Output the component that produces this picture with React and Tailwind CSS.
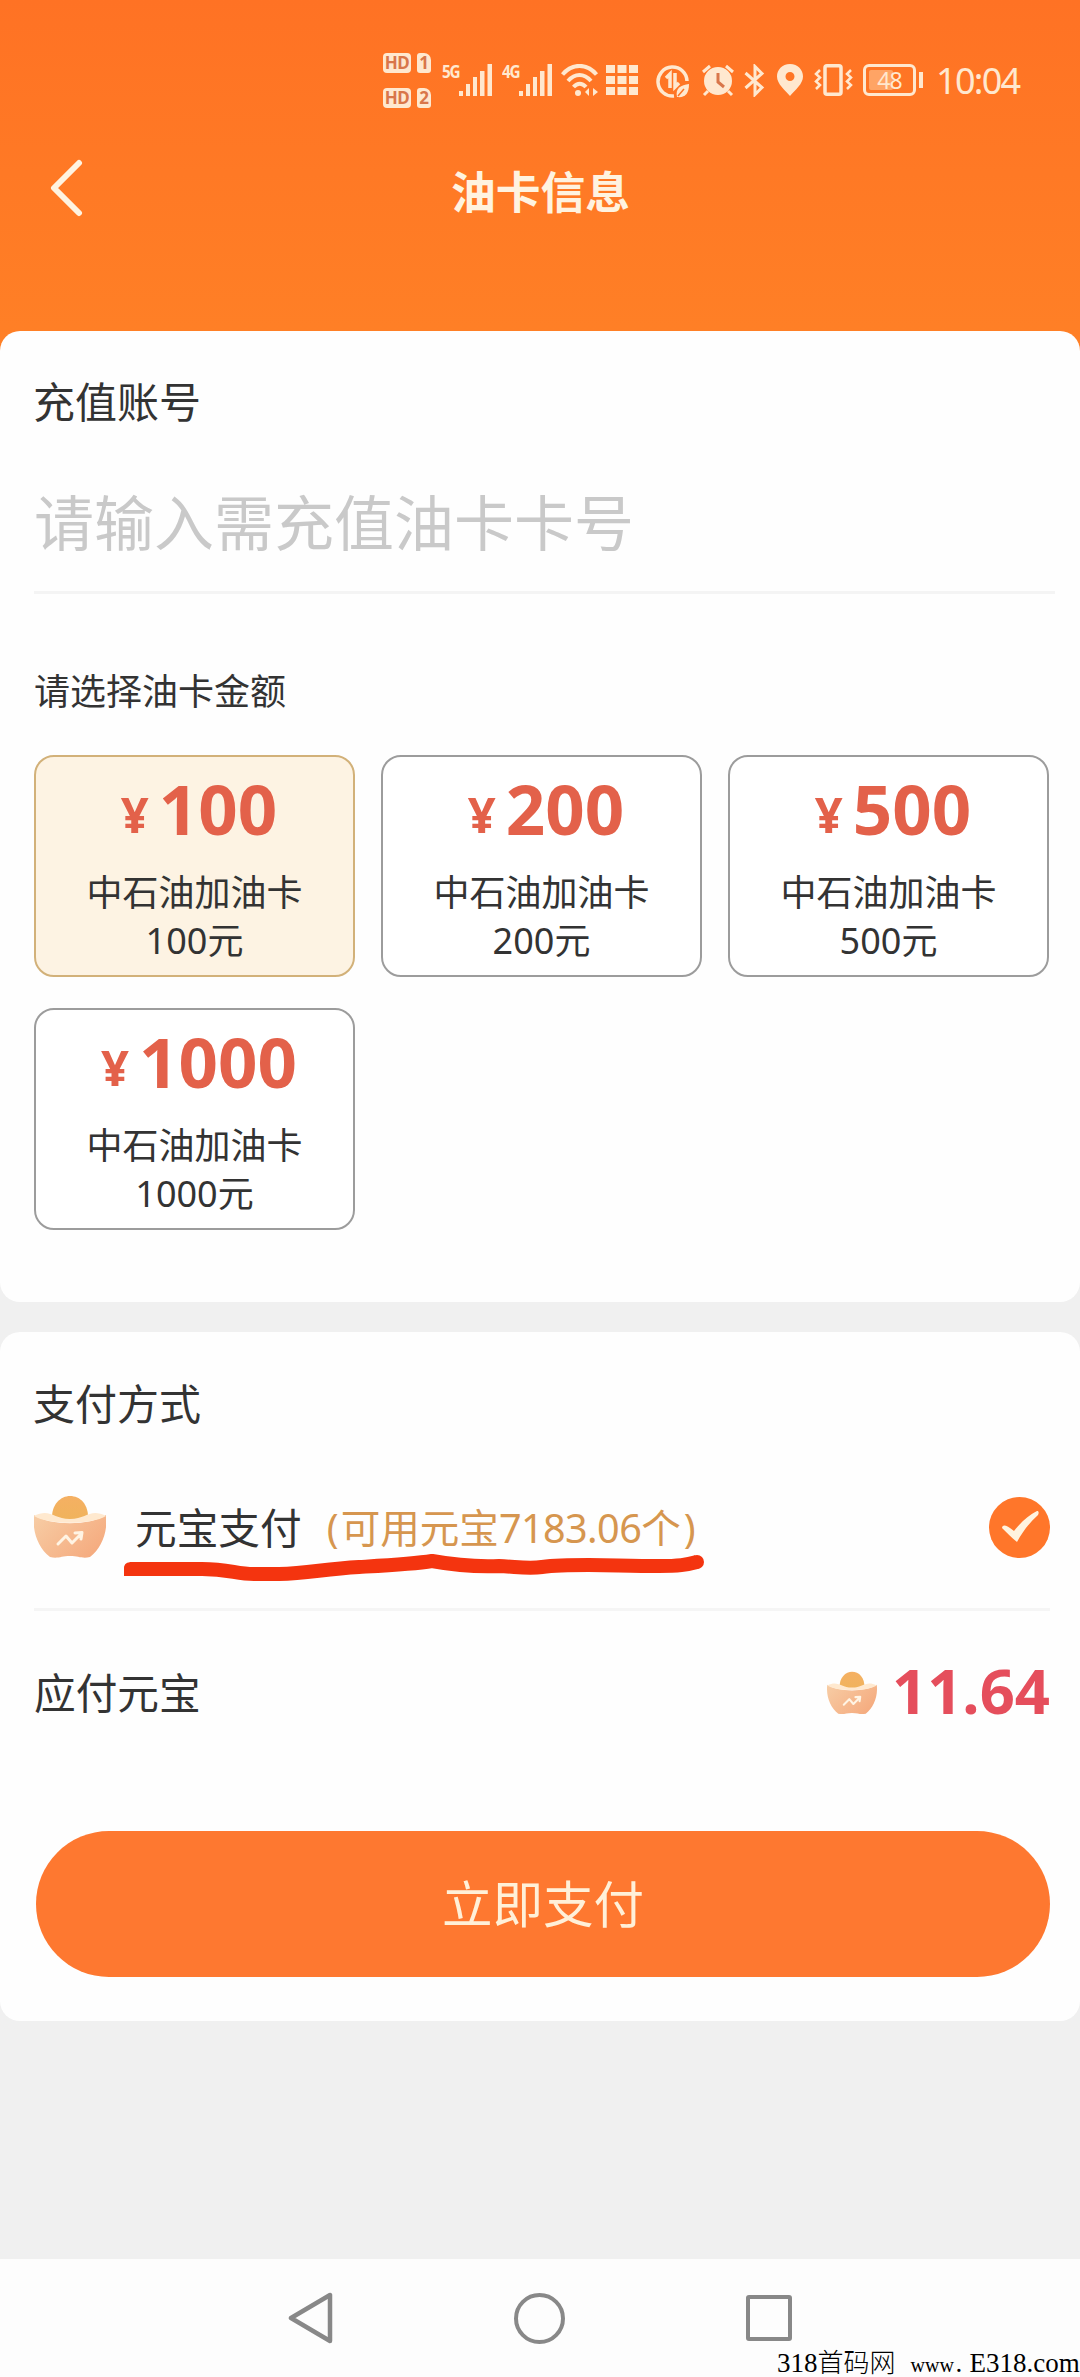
import React, { useState } from 'react';

const cards = [100, 200, 500, 1000];

const Signal = ({ label }) => (
    <div className="flex">
        <span className="w-[17px] h-[14px] mt-[1px] text-[17px] leading-[14px] font-bold tracking-[-1.5px] scale-x-90 origin-left">{label}</span>
        <svg width="34" height="32" viewBox="0 0 34 32" fill="currentColor">
            <rect x="0" y="27" width="4" height="5" />
            <rect x="7" y="20" width="4" height="12" />
            <rect x="14" y="13" width="4" height="19" />
            <rect x="21" y="7" width="4.500" height="25" />
            <rect x="28.500" y="0" width="4.500" height="32" />
        </svg>
    </div>
);

const SimBadge = ({ slot }) => (
    <div className="flex h-5 text-[#d9764a] text-[17px] leading-5 font-bold">
        <span className="w-7 mr-[6px] rounded-[4px] bg-[#ffe8cf] text-center tracking-[-0.5px]">HD</span>
        <span className="w-[14px] rounded-[3px] rounded-tr-[7px] bg-[#ffe8cf] text-center">{slot}</span>
    </div>
);

const StatusBar = () => (
    <div className="flex items-start h-[120px] pl-[383px] pt-16 text-[#ffe8cf]">
        <div className="flex flex-col gap-[15px] -mt-[11px] w-[48px] mr-[11px]">
            <SimBadge slot="1" />
            <SimBadge slot="2" />
        </div>
        <Signal label="5G" />
        <div className="ml-[9px]">
            <Signal label="4G" />
        </div>
        {/* wifi */}
        <svg className="ml-[8px]" width="39" height="33" viewBox="0 0 39 33" fill="none" stroke="currentColor" strokeWidth="4">
            <path d="M1.500 10.500C11-1 26-1 35.500 10.500" />
            <path d="M7 17C14 9 23 9 30 17" />
            <path d="M12.500 23C16.500 18.500 21 18.500 25 23" />
            <circle cx="17" cy="29" r="3" fill="currentColor" stroke="none" />
            <path d="M28 24v8l-4-4zM32 24v8l5-4z" fill="currentColor" stroke="none" />
        </svg>
        {/* grid */}
        <svg className="ml-[6px] mt-[1px]" width="32" height="30" viewBox="0 0 32 30" fill="currentColor">
            <path d="M0 0h9v8H0zM11.500 0h9v8h-9zM23 0h9v8h-9zM0 11h9v8H0zM11.500 11h9v8h-9zM23 11h9v8h-9zM0 22h9v8H0zM11.500 22h9v8h-9zM23 22h9v8h-9z" />
        </svg>
        {/* data saver */}
        <svg className="ml-[18px]" width="35" height="35" viewBox="0 0 35 35" fill="none" stroke="currentColor" strokeWidth="3.500">
            <path d="M18 32A14.500 14.500 0 1 1 31 17" />
            <path d="M10 14l4-4v14M19 9v14l4-4" />
            <path d="M21 33c-2-9 4-12 12-13c0 10-4 14-12 13z" fill="currentColor" stroke="none" />
            <path d="M22 32l6-7" stroke="#fe7424" strokeWidth="1.500" />
        </svg>
        {/* alarm */}
        <svg className="ml-[10px]" width="34" height="33" viewBox="0 0 34 33" fill="none" stroke="currentColor" strokeWidth="3">
            <circle cx="17" cy="17" r="12.500" fill="currentColor" />
            <path d="M2 8l7-6M32 8l-7-6M7 27l-4 4M27 27l4 4" />
            <path d="M17 9v9l6 5" stroke="#d9764a" strokeWidth="3" />
        </svg>
        {/* bluetooth */}
        <svg className="ml-[9px]" width="22" height="33" viewBox="0 0 22 33" fill="none" stroke="currentColor" strokeWidth="3">
            <path d="M1.500 9L18 23.500L11 30.500V2.500L18 9.500L1.500 24" />
        </svg>
        {/* location */}
        <svg className="ml-[11px]" width="26" height="32" viewBox="0 0 26 32" fill="currentColor" fillRule="evenodd">
            <path d="M13 0C5 0 0 6 0 12.500C0 20 8 26 13 32C18 26 26 20 26 12.500C26 6 21 0 13 0zM13 8a4.500 4.500 0 1 1 0 9a4.500 4.500 0 1 1 0-9z" />
        </svg>
        {/* vibrate */}
        <svg className="ml-[11px]" width="39" height="32" viewBox="0 0 39 32" fill="none" stroke="currentColor" strokeWidth="3.500">
            <rect x="11" y="1.750" width="16" height="28.500" rx="2" />
            <path d="M6 6l-4 4l4 3.500l-4 4l4 3.500l-4 4M37 6l-4 4l4 3.500l-4 4l4 3.500l-4 4" strokeWidth="2.500" />
        </svg>
        {/* battery */}
        <div className="flex items-center ml-[10px]">
            <div className="w-[53px] h-8 border-[3px] border-[#ffe8cf] rounded-[6px] p-[3px]">
                <div className="w-[24px] h-full bg-[#ffa465] rounded-[2px]">
                    <span className="block w-[41px] text-center text-[23px] leading-[20px] tracking-[-1px]">48</span>
                </div>
            </div>
            <div className="w-1 h-4 ml-[3px] bg-[#ffe8cf]"></div>
        </div>
        <span className="ml-[13px] text-[36px] leading-[34px] tracking-[-1.7px]">10:04</span>
    </div>
);

const Ingot = ({ className }) => (
    <svg className={className} viewBox="0 0 72 64" fill="none">
        <defs>
            <linearGradient id="ball" x1="0" y1="0" x2="0" y2="1">
                <stop offset="0" stopColor="#f5b063" />
                <stop offset="1" stopColor="#f0b35c" />
            </linearGradient>
            <linearGradient id="boat" x1="0" y1="0" x2="1" y2="0.6">
                <stop offset="0" stopColor="#f7cda5" />
                <stop offset="1" stopColor="#f5ac80" />
            </linearGradient>
        </defs>
        <path d="M18 25C17 9 27 1 36 1C46 1 55 9 54 25z" fill="url(#ball)" />
        <path d="M0 20C16 31 56 31 72 20C74 36 68 53 56 62C48 64 45 61 36 61C27 61 24 64 16 62C4 53 -2 36 0 20z" fill="url(#boat)" />
        <path d="M0 21C16 13 19 24 36 24C53 24 56 13 72 21C58 30 14 30 0 21z" fill="#ffe9cf" />
        <path d="M24 49L32 41L38 48L47 39M41 38L48 37.500L47 44" stroke="#fff4e4" strokeWidth="3" strokeLinejoin="round" strokeLinecap="round" />
    </svg>
);

const CardOption = ({ value, active, onClick }) => (
    <button
        onClick={onClick}
        className={
            active
                ? 'flex flex-col h-[222px] pt-[7px] rounded-[20px] border-[2.5px] border-[#d2b179] bg-[#fdf3e3] text-center'
                : 'flex flex-col h-[222px] pt-[7px] rounded-[20px] border-[2.5px] border-[#9c9c9c] bg-white text-center'
        }
    >
        <div className="flex justify-center w-full h-[92px] pl-[9px] font-bold text-[#e3614a]">
            <span className="mr-[10px] text-[49px] leading-[100px]">¥</span>
            <span className="text-[69px] leading-[88px]">{value}</span>
        </div>
        <p className="w-full h-[48px] text-[36px] leading-[48px] mt-[13px]">中石油加油卡</p>
        <p className="w-full h-[48px] text-[36px] leading-[47px]">{value}元</p>
    </button>
);

const App = () => {
    const [selected, setSelected] = useState(100);

    return (
        <div className="flex flex-col w-[1080px] h-[2377px] overflow-hidden bg-[#f0f0f0] text-[#333] font-['Noto_Sans','Noto_Sans_CJK_SC',sans-serif]">
            <header className="h-[351px] shrink-0 bg-linear-to-b from-[#ff7224] to-[#ff8026]">
                <StatusBar />
                <div className="grid grid-cols-3 items-center h-[138px] px-[50px]">
                    <svg width="34" height="60" viewBox="0 0 34 60" fill="none" stroke="#fff3e0" strokeWidth="6" strokeLinecap="round" strokeLinejoin="round">
                        <path d="M29 4L4 29L29 54" />
                    </svg>
                    <h1 className="pt-[5px] pl-px text-center text-[44.8px] leading-[60px] font-bold text-[#fff3e0]">油卡信息</h1>
                </div>
            </header>

            <section className="relative h-[971px] shrink-0 -mt-5 pl-[34px] pr-[31px] pt-[41px] rounded-[20px] bg-[#fefefe]">
                <h2 className="h-[60px] text-[42px] leading-[60px] -ml-px">充值账号</h2>
                <div className="h-[162px] pt-[49px] mr-[-6px] border-b-[3px] border-[#f4f4f4] text-[60px] leading-[84px] text-[#c9c9c9]">
                    请输入需充值油卡卡号
                </div>
                <p className="mt-[72px] h-[52px] text-[36px] leading-[52px]">请选择油卡金额</p>
                <div className="grid grid-cols-3 gap-x-[26px] gap-y-[31px] mt-[37px]">
                    {cards.map(value => (
                        <CardOption
                            key={value}
                            value={value}
                            active={value === selected}
                            onClick={() => setSelected(value)}
                        />
                    ))}
                </div>
            </section>

            <section className="h-[689px] shrink-0 mt-[30px] pl-[34px] pr-[30px] pt-[42px] rounded-[20px] bg-[#fefefe]">
                <h2 className="h-[60px] text-[42px] leading-[60px] -ml-px">支付方式</h2>
                <div className="relative flex items-center h-[172px] mt-[5px] pt-[7px] border-b-[3px] border-[#f5f5f5]">
                    <Ingot className="w-[72px] h-16" />
                    <span className="ml-[29px] pt-[1px] text-[41.7px] leading-[60px]">元宝支付</span>
                    <span className="ml-[25px] pt-[1px] flex text-[39.6px] leading-[60px] text-[#d6964f]">
                        <span>(</span>
                        <span className="ml-[2px]">可用元宝</span>
                        <span className="tracking-[-0.6px]">7183.06</span>
                        <span>个</span>
                        <span className="ml-[3px]">)</span>
                    </span>
                    <svg className="ml-auto" width="61" height="61" viewBox="0 0 61 61">
                        <circle cx="30.500" cy="30.500" r="30.500" fill="#ff762a" />
                        <path d="M13 31C14 27 17 28 25 34C32 25 40 18 48 14C50 14 50 16 49 18C41 25 34 34 28 45C23 41 17 35 13 31z" fill="#fff3df" />
                    </svg>
                    {/* hand drawn underline */}
                    <svg className="absolute left-[90px] top-[106px]" width="590" height="40" viewBox="0 0 590 40" fill="none" stroke="#f4340f" strokeWidth="14" strokeLinejoin="round">
                        <path d="M7 24H78C105 24 112 29 130 29H155C185 28 200 24 235 22C270 20 290 19 308 16C330 20 350 22 375 21C395 22 405 24 418 22C450 18 490 21 535 21C555 21 562 20 573 17" />
                        <path d="M0 31V23C0 19 3 17 8 17V31z" fill="#f4340f" stroke="none" />
                        <circle cx="573" cy="17" r="7" fill="#f4340f" stroke="none" />
                    </svg>
                </div>
                <div className="flex items-center h-[164px]">
                    <span className="text-[41.7px] leading-[60px]">应付元宝</span>
                    <Ingot className="ml-auto w-[50px] h-[44px]" />
                    <span className="ml-[15px] pb-[6px] text-[61.5px] leading-[60px] font-bold text-[#e54e5c]">11.64</span>
                </div>
                <button className="block w-[1014px] h-[146px] ml-[2px] mt-[56px] rounded-full bg-[#fe7830] text-[50.5px] leading-[142px] text-[#fff0d8]">
                    立即支付
                </button>
            </section>

            <footer className="mt-auto h-[118px] shrink-0 bg-[#fdfdfd]">
                <div className="flex items-center h-[118px] pl-[288px]">
                    <svg width="46" height="54" viewBox="0 0 46 54" fill="none" stroke="#888" strokeWidth="4.500" strokeLinejoin="round">
                        <path d="M42 4V50L3 27z" />
                    </svg>
                    <div className="w-[51px] h-[51px] ml-[180px] rounded-full border-[4.5px] border-[#888]"></div>
                    <div className="w-[46px] h-[46px] ml-[181px] rounded-[3px] border-[4.5px] border-[#888]"></div>
                </div>
                {/* site mark over the navigation bar */}
                <div className="absolute left-[777px] top-[2349px] flex items-baseline whitespace-nowrap text-black text-[27px] leading-[28px] font-['Liberation_Serif','Noto_Sans_CJK_SC',serif]">
                    <span>318</span>
                    <span className="w-[80px] text-[26px] font-light">首码网</span>
                    <span className="ml-[13px] w-[45px] text-[20px]">www</span>
                    <span className="w-[14px]">.</span>
                    <span>E318.com</span>
                </div>
            </footer>
        </div>
    );
};

export default App;
